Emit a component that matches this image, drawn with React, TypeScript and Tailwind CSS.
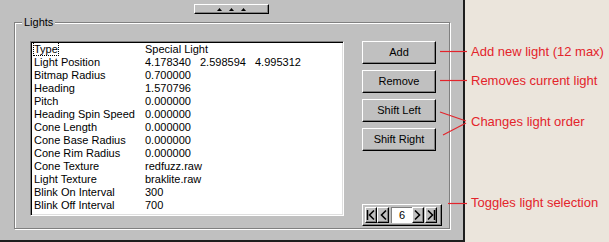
const rows: [string, string[]][] = [
  ["Type", ["Special Light"]],
  ["Light Position", ["4.178340", "2.598594", "4.995312"]],
  ["Bitmap Radius", ["0.700000"]],
  ["Heading", ["1.570796"]],
  ["Pitch", ["0.000000"]],
  ["Heading Spin Speed", ["0.000000"]],
  ["Cone Length", ["0.000000"]],
  ["Cone Base Radius", ["0.000000"]],
  ["Cone Rim Radius", ["0.000000"]],
  ["Cone Texture", ["redfuzz.raw"]],
  ["Light Texture", ["braklite.raw"]],
  ["Blink On Interval", ["300"]],
  ["Blink Off Interval", ["700"]],
];

const raised =
  "border border-t-white border-l-white border-r-black border-b-black bg-[#c0c0c0] shadow-[inset_-1px_-1px_0_#808080]";

function WinButton({ label }: { label: string }) {
  return (
    <div className={`${raised} w-[74px] h-[23px] flex items-center justify-center text-[11px] leading-none`}>
      {label}
    </div>
  );
}

function Chevron({ dir, bar }: { dir: "left" | "right"; bar?: boolean }) {
  const left = dir === "left";
  return (
    <svg width="10" height="12" viewBox="0 0 10 12" className="block">
      {bar && <path d={left ? "M1.5 1V11" : "M8.5 1V11"} stroke="#000" strokeWidth="1.5" />}
      <path
        d={left ? "M8 1.5L3.5 6L8 10.5" : "M2 1.5L6.5 6L2 10.5"}
        fill="none"
        stroke="#000"
        strokeWidth="1.6"
      />
    </svg>
  );
}

function NavButton({ dir, bar }: { dir: "left" | "right"; bar?: boolean }) {
  return (
    <div className={`${raised} w-[12px] h-[16px] flex items-center justify-center`}>
      <Chevron dir={dir} bar={bar} />
    </div>
  );
}

export default function App() {
  return (
    <div className="relative flex w-[609px] h-[242px] overflow-hidden bg-[#ebe5dc] font-['Liberation_Sans',Arial,sans-serif] text-black">
      {/* ── Dialog panel ── */}
      <div className="flex flex-col w-[465px] h-[242px] shrink-0 bg-[#c0c0c0] border-r-2 border-b-2 border-[#1e1e1e] pt-[4px]">
        <div className={`${raised} mx-auto w-[75px] h-[10px] flex items-center justify-center gap-[7px]`}>
          {[0, 1, 2].map((i) => (
            <svg key={i} width="5" height="3" viewBox="0 0 5 3" className="block">
              <path d="M2.5 0L5 3H0Z" fill="#000" />
            </svg>
          ))}
        </div>

        {/* Lights group box */}
        <div className="relative ml-[14px] mt-[8px] w-[436px] h-[207px] border border-[#808080] shadow-[inset_1px_1px_0_#fff,1px_1px_0_#fff] flex gap-[18px] pl-[15px] pt-[18px]">
          <span className="absolute left-[7px] -top-[7px] px-[2px] bg-[#c0c0c0] text-[11px] leading-[13px]">
            Lights
          </span>

          {/* list */}
          <div className="w-[314px] h-[175px] bg-white border border-t-[#808080] border-l-[#808080] border-r-white border-b-white shadow-[inset_1px_1px_0_#000,inset_-1px_-1px_0_#dfdfdf] pt-[1px] pl-[3px] text-[11px] leading-[13px] overflow-hidden">
            {rows.map(([label, values], i) => (
              <div key={label} className="flex h-[13px] whitespace-nowrap">
                <div className="w-[111px] shrink-0">
                  {i === 0 ? (
                    <span className="-ml-[1px] border border-dotted border-black">{label}</span>
                  ) : (
                    label
                  )}
                </div>
                {values.map((v, j) => (
                  <div key={j} className="w-[55px] shrink-0">
                    {v}
                  </div>
                ))}
              </div>
            ))}
          </div>

          {/* buttons */}
          <div className="flex flex-col gap-[6px] w-[80px]">
            <WinButton label="Add" />
            <WinButton label="Remove" />
            <WinButton label="Shift Left" />
            <WinButton label="Shift Right" />

            <div className={`${raised} mt-auto mb-[2px] w-[80px] h-[22px] flex items-center pl-[2px]`}>
              <NavButton dir="left" bar />
              <NavButton dir="left" />
              <div className="ml-[2px] w-[21px] h-[16px] bg-white border-t border-l border-[#808080] flex items-center justify-center text-[11px] leading-none">
                6
              </div>
              <NavButton dir="right" />
              <div className="ml-[1px]">
                <NavButton dir="right" bar />
              </div>
            </div>
          </div>
        </div>
      </div>

      {/* ── Annotations ── */}
      <div className="flex flex-col pl-[6px] pt-[44px] text-[13px] leading-[16px] text-[#e3242b] whitespace-nowrap">
        <span>Add new light (12 max)</span>
        <span className="mt-[13px]">Removes current light</span>
        <span className="mt-[25px]">Changes light order</span>
        <span className="mt-[65px]">Toggles light selection</span>
      </div>

      <svg
        className="absolute left-0 top-0 pointer-events-none"
        width="609"
        height="242"
        viewBox="0 0 609 242"
      >
        <g stroke="#e3242b" strokeWidth="1.2" fill="none">
          <path d="M440 51.5H467" />
          <path d="M440 80.5H467" />
          <path d="M440 112L466 121" />
          <path d="M443 135L466 123" />
          <path d="M448 203.5H467" />
        </g>
      </svg>
    </div>
  );
}
